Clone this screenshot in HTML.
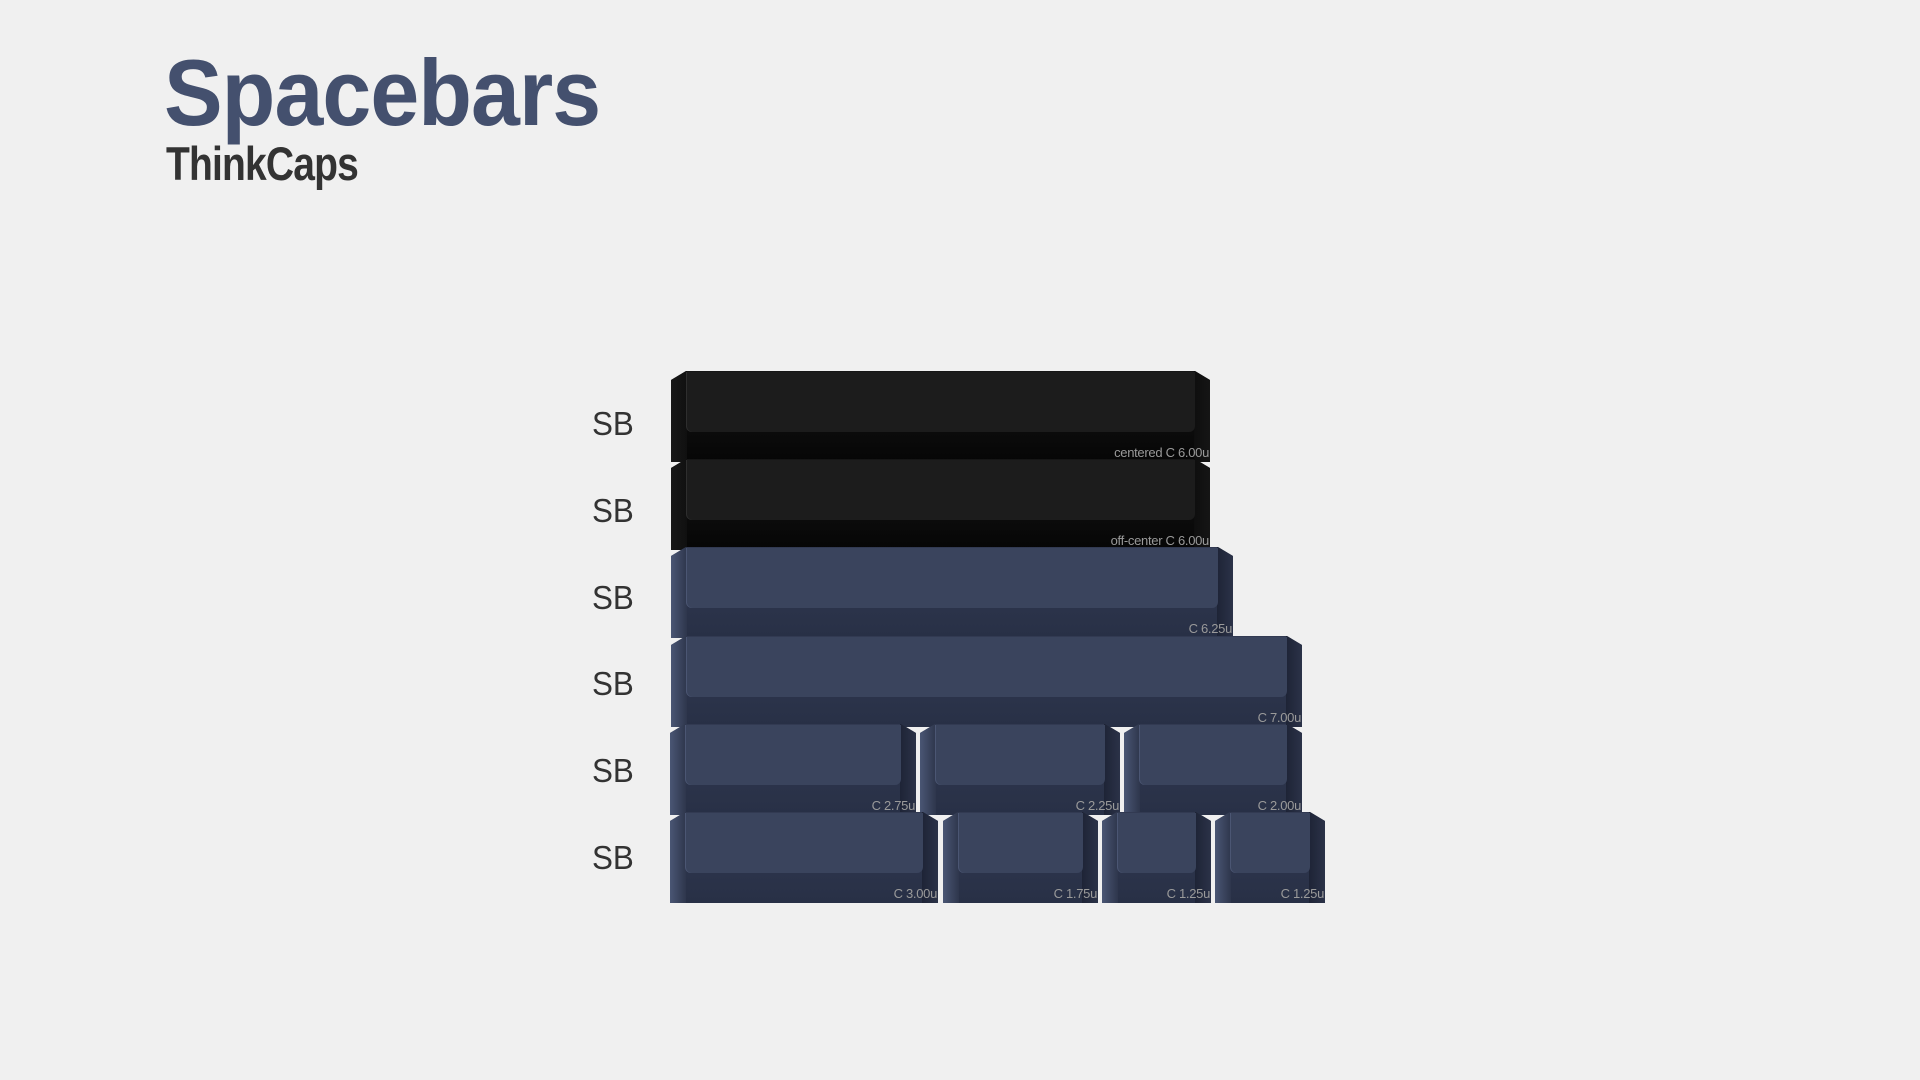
<!DOCTYPE html>
<html><head><meta charset="utf-8"><style>
*{margin:0;padding:0;box-sizing:border-box}
body{width:1920px;height:1080px;background:#f0f0f0;position:relative;overflow:hidden;font-family:"Liberation Sans",sans-serif}
.t1{position:absolute;left:164px;top:38px;font-size:94px;font-weight:bold;color:#44506e;letter-spacing:-1px;line-height:110px;transform:scaleX(0.935);transform-origin:left top}
.t2{position:absolute;left:166px;top:138px;font-size:47px;font-weight:bold;color:#333;line-height:52px;transform:scaleX(0.83);transform-origin:left top;letter-spacing:-1px}
.sb{position:absolute;left:592px;font-size:33px;color:#333;line-height:40px;transform:scaleX(0.95);transform-origin:left}
.k{position:absolute;height:91px;clip-path:polygon(0 9px,15px 0,calc(100% - 15px) 0,100% 9px,100% 100%,0 100%)}
.k .f{position:absolute;left:15px;right:15px;top:1px;height:60px;border-radius:0 0 6px 6px}
.k .l{position:absolute;left:0;top:0;bottom:0;width:16px}
.k .r{position:absolute;right:0;top:0;bottom:0;width:16px}
.k span{position:absolute;right:1px;bottom:2px;font-size:13px;color:#9a9a9a;letter-spacing:-0.3px;line-height:14px}
.b{background:linear-gradient(#161616,#060606)}
.b .f{background:#1c1c1c;box-shadow:inset 1px 0 0 #2e2e2e}
.b .l{background:linear-gradient(90deg,#181818,#101010)}
.b .r{background:linear-gradient(90deg,#0e0e0e,#151515)}
.n{background:linear-gradient(#323a52,#283046)}
.n .f{background:#3a445d;box-shadow:inset 1px 0 0 #4b5673}
.n .l{background:linear-gradient(90deg,#4a5674,#2e364c)}
.n .r{background:linear-gradient(90deg,#1e2436,#2b3248)}
</style></head><body>
<div class="t1">Spacebars</div>
<div class="t2">ThinkCaps</div>
<div class="sb" style="top:404px">SB</div>
<div class="sb" style="top:491px">SB</div>
<div class="sb" style="top:578px">SB</div>
<div class="sb" style="top:664px">SB</div>
<div class="sb" style="top:751px">SB</div>
<div class="sb" style="top:838px">SB</div>

<div class="k b" style="left:671px;top:371px;width:539px"><div class="l"></div><div class="r"></div><div class="f"></div><span>centered C 6.00u</span></div>
<div class="k b" style="left:671px;top:459px;width:539px"><div class="l"></div><div class="r"></div><div class="f"></div><span>off-center C 6.00u</span></div>
<div class="k n" style="left:671px;top:547px;width:562px"><div class="l"></div><div class="r"></div><div class="f"></div><span>C 6.25u</span></div>
<div class="k n" style="left:671px;top:636px;width:631px"><div class="l"></div><div class="r"></div><div class="f"></div><span>C 7.00u</span></div>
<div class="k n" style="left:670px;top:724px;width:246px"><div class="l"></div><div class="r"></div><div class="f"></div><span>C 2.75u</span></div>
<div class="k n" style="left:920px;top:724px;width:200px"><div class="l"></div><div class="r"></div><div class="f"></div><span>C 2.25u</span></div>
<div class="k n" style="left:1124px;top:724px;width:178px"><div class="l"></div><div class="r"></div><div class="f"></div><span>C 2.00u</span></div>
<div class="k n" style="left:670px;top:812px;width:268px"><div class="l"></div><div class="r"></div><div class="f"></div><span>C 3.00u</span></div>
<div class="k n" style="left:943px;top:812px;width:155px"><div class="l"></div><div class="r"></div><div class="f"></div><span>C 1.75u</span></div>
<div class="k n" style="left:1102px;top:812px;width:109px"><div class="l"></div><div class="r"></div><div class="f"></div><span>C 1.25u</span></div>
<div class="k n" style="left:1215px;top:812px;width:110px"><div class="l"></div><div class="r"></div><div class="f"></div><span>C 1.25u</span></div>
</body></html>
